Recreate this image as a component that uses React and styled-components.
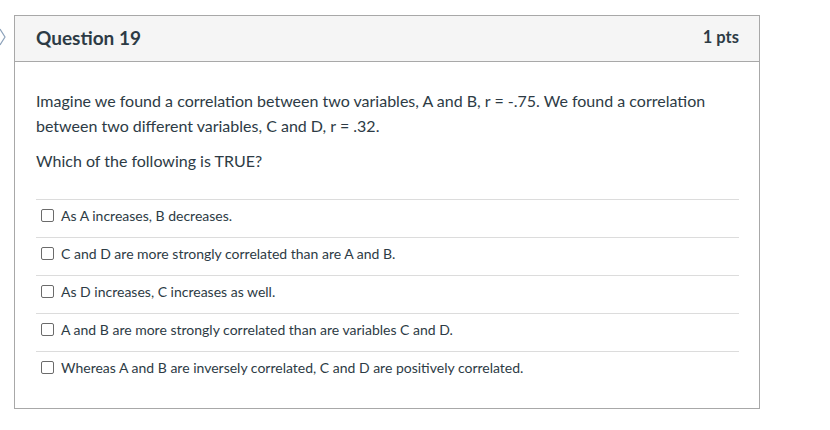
import React from 'react';
import styled, { createGlobalStyle } from 'styled-components';

const GlobalStyle = createGlobalStyle`
    body {
        margin: 0;
        background: #ffffff;
        font-family: Lato, "Helvetica Neue", Arial, sans-serif;
        color: #2d3b45;
    }
`;

const answers = [
    'As A increases, B decreases.',
    'C and D are more strongly correlated than are A and B.',
    'As D increases, C increases as well.',
    'A and B are more strongly correlated than are variables C and D.',
    'Whereas A and B are inversely correlated, C and D are positively correlated.'
];

const App = () => {
    return (
        <Page>
            <GlobalStyle />
            <Chevron width="6" height="18" viewBox="0 0 6 18">
                <path d="M0 1 L5 9 L0 17" fill="none" stroke="#8ea3bb" strokeWidth="1.2" />
            </Chevron>
            <Card>
                <Header>
                    <Title>Question 19</Title>
                    <Points>1 pts</Points>
                </Header>
                <Body>
                    <Paragraph>
                        Imagine we found a correlation between two variables, A and B, r = -.75. We found a correlation
                        between two different variables, C and D, r = .32.
                    </Paragraph>
                    <Paragraph>Which of the following is TRUE?</Paragraph>
                    <AnswerList>
                        {answers.map(text => (
                            <Answer key={text}>
                                <Box />
                                <AnswerText>{text}</AnswerText>
                            </Answer>
                        ))}
                    </AnswerList>
                </Body>
            </Card>
        </Page>
    );
};

const Page = styled.div`
    display: flex;
    align-items: flex-start;
    padding-top: 15px;
`;

const Chevron = styled.svg`
    display: block;
    flex-shrink: 0;
    margin-top: 13px;
    margin-right: 8px;
`;

const Card = styled.div`
    width: 746px;
    box-sizing: border-box;
    border: 1px solid #a8a8a8;
`;

const Header = styled.div`
    height: 46px;
    box-sizing: border-box;
    display: flex;
    align-items: center;
    justify-content: space-between;
    padding: 0 20px 3px 21px;
    background: #f5f5f5;
    border-bottom: 1px solid #a8a8a8;
`;

const Title = styled.h2`
    margin: 0;
    font-size: 19px;
    font-weight: 700;
    color: #2d3b45;
`;

const Points = styled.div`
    font-size: 16.5px;
    font-weight: 700;
    color: #2d3b45;
`;

const Body = styled.div`
    padding: 27px 20px 19px 21px;
`;

const Paragraph = styled.p`
    margin: 0 0 11px;
    font-size: 16px;
    line-height: 24.5px;
    color: #2d3b45;
`;

const AnswerList = styled.div`
    margin-top: 25px;
`;

const Answer = styled.div`
    display: flex;
    align-items: center;
    height: 38px;
    box-sizing: border-box;
    padding: 7px 0 12px 5px;
    border-top: 1px solid #dcdcdc;
`;

const Box = styled.span`
    width: 11px;
    height: 11px;
    border: 1px solid #6b6b6b;
    border-radius: 2px;
    background: #ffffff;
    flex-shrink: 0;
    margin-right: 7px;
`;

const AnswerText = styled.span`
    font-size: 14px;
    line-height: 18px;
    color: #2d3b45;
`;

export default App;
